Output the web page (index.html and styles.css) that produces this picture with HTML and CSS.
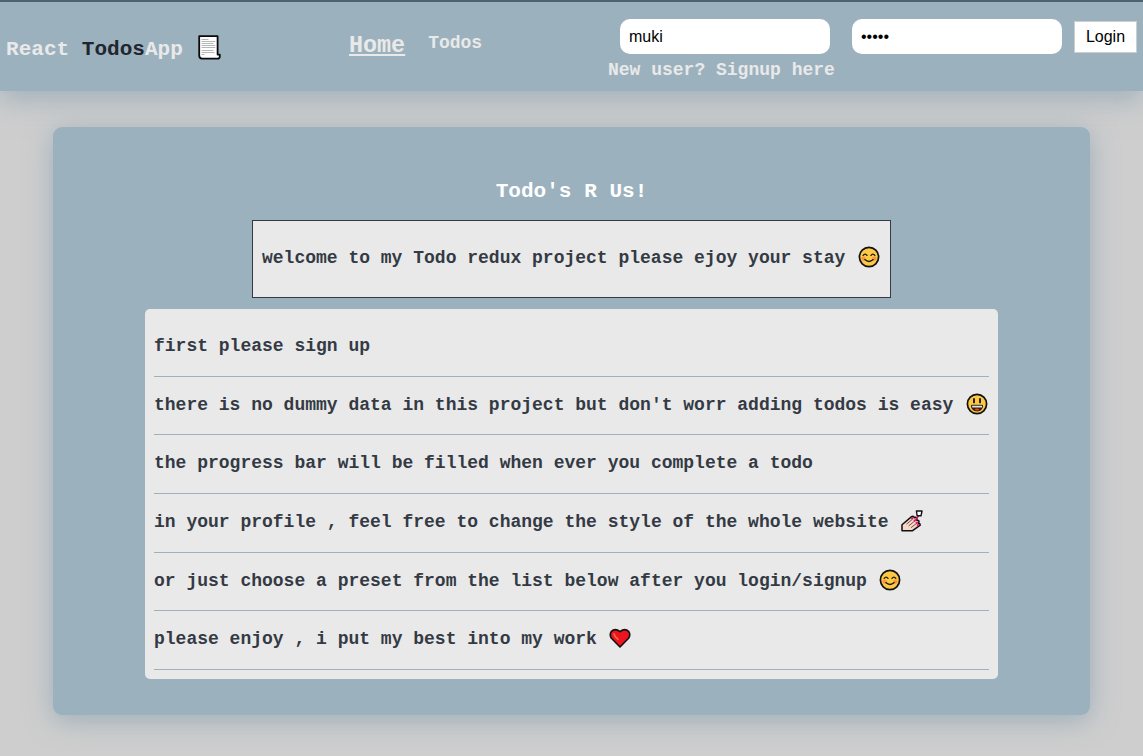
FILE: index.html
```html
<!DOCTYPE html>
<html lang="en">
<head>
<meta charset="utf-8">
<title>React TodosApp</title>
<link rel="stylesheet" href="styles.css">
</head>
<body>
<svg class="defs" width="0" height="0">
  <symbol id="smile" viewBox="0 0 22 22">
    <circle cx="11" cy="11" r="9.6" fill="#fcc944" stroke="#111" stroke-width="1.7"/>
    <circle cx="5.6" cy="12.6" r="2.2" fill="#f5983f"/><circle cx="16.4" cy="12.6" r="2.2" fill="#f5983f"/>
    <path d="M5.2 9.4q1.9-2.6 3.8 0M13 9.4q1.9-2.6 3.8 0M6.8 13.6q4.2 3.8 8.4 0" fill="none" stroke="#20180c" stroke-width="1.3" stroke-linecap="round"/>
  </symbol>
</svg>
<header class="navbar">
  <h3 class="logo">React&nbsp;<span class="logo-dark">Todos</span>App
    <svg class="scroll" viewBox="0 0 23 25">
      <path d="M1.2 1.2H19.6V19.6h2.2v1.8q0 2.2-2.4 2.2H4q-2.8 0-2.8-3z" fill="#fff" stroke="#0b0b0b" stroke-width="1.8" stroke-linejoin="round"/>
      <path d="M3.5 4.5h7M3.5 6.5h13.8M3.5 8.5h12M3.5 10.5h13.8M3.5 12.5h13.8M3.5 15.5h12M3.5 17.5h13M3.5 19.5h3" stroke="#b5b8ba" stroke-width="1"/>
    </svg>
  </h3>
  <nav class="links">
    <a class="home">Home</a>
    <a class="todos">Todos</a>
  </nav>
  <form class="login">
    <div class="fields">
      <input type="text" value="muki">
      <input type="password" value="abcde">
      <button type="button">Login</button>
    </div>
    <a class="signup">New user? Signup here</a>
  </form>
</header>
<main class="card">
  <h3 class="title">Todo's R Us!</h3>
  <div class="welcome">welcome to my Todo redux project please ejoy your stay <svg class="emoji"><use href="#smile"/></svg></div>
  <div class="list">
    <p>first please sign up</p>
    <p>there is no dummy data in this project but don't worr adding todos is easy
      <svg class="emoji" viewBox="0 0 22 22">
        <circle cx="11" cy="11" r="9.6" fill="#fcc944" stroke="#111" stroke-width="1.7"/>
        <path d="M8 6v3.4M14 6v3.4" stroke="#20180c" stroke-width="1.9" stroke-linecap="round"/>
        <path d="M5.5 12.3h11q0 5.6-5.5 5.6t-5.5-5.6z" fill="#351f12" stroke="#20180c" stroke-width="1"/>
        <path d="M6 12.7h10v1.7H6.3z" fill="#d9e4e4"/>
        <ellipse cx="11" cy="16.5" rx="2.2" ry="1" fill="#ed3b25"/>
      </svg></p>
    <p>the progress bar will be filled when ever you complete a todo</p>
    <p>in your profile , feel free to change the style of the whole website
      <svg class="emoji" viewBox="0 0 22 22">
        <path d="M1 14.8 10.6 6.6q1.4-.9 2.2.3l.4.8 1.6-.4 1.2 1.6-.2 1.4 1.8.3.5 1.4-.8 1.5 1.6.3.3 1.3-7.6 5.6H1z" fill="#f8d9c5" stroke="#111" stroke-width="1.5" stroke-linejoin="round"/>
        <path d="M5.5 14.2l6.2-5.2M7.6 16l6.8-5.6M10 17.7l6-4.6" stroke="#4a342d" stroke-width=".8"/>
        <path d="M10.4 9l1.8-1.6M13 11.2l2-1.8M14.9 13.4l1.8-1.5M16 15.8l1.7-1.3" stroke="#e5176c" stroke-width="1.9"/>
        <path d="M15.4 9.2l2.2-3.6" stroke="#e5176c" stroke-width="1.5"/>
        <path d="M15.4 1h5.6l-1 4.8h-3.8z" fill="#fff" stroke="#111" stroke-width="1.4" stroke-linejoin="round"/>
      </svg></p>
    <p>or just choose a preset from the list below after you login/signup <svg class="emoji"><use href="#smile"/></svg></p>
    <p>please enjoy , i put my best into my work
      <svg class="emoji" viewBox="0 0 22 22">
        <path d="M11 20 2.4 11.2Q.2 7.8 2.2 4.6 6 .8 11 4.6q5-3.8 8.8 0 2 3.2-.2 6.6z" fill="#ed1420" stroke="#111" stroke-width="1.6" stroke-linejoin="round"/>
        <path d="M5 6.8q.4 2.8 4 5.4" fill="none" stroke="#f5683f" stroke-width="1.7" stroke-linecap="round"/>
      </svg></p>
  </div>
</main>
</body>
</html>
```
FILE: styles.css
```css
* { box-sizing: border-box; }
body {
  margin: 0;
  height: 756px;
  overflow: hidden;
  background: #cecece;
  font: bold 18px/21px "Courier New", "Liberation Mono", monospace;
  color: #343a44;
}
.defs { display: block; }
.navbar {
  display: flex;
  height: 91px;
  padding-left: 6px;
  background: #9cb1be;
  border-top: 2px solid #4f626e;
  box-shadow: 0 7px 27px rgba(140, 163, 178, .75);
  color: #e9e9e9;
}
.logo {
  display: flex;
  width: 343px;
  margin: 0;
  padding-top: 34px;
  font-size: 21.06px;
  line-height: 27px;
}
.logo-dark { color: #20262e; }
.scroll { width: 23px; height: 25px; margin: -1px 0 0 15px; }
.links { display: flex; gap: 23px; width: 259px; padding-top: 31px; }
.home { font-size: 23.4px; line-height: 27px; text-decoration: underline; }
.todos { line-height: 21px; }
.login { display: flex; flex-direction: column; margin: 0; padding-top: 17px; }
.fields { display: flex; align-items: center; padding-left: 12px; }
.fields input {
  width: 210px;
  height: 35px;
  margin: 0 22px 0 0;
  padding: 0 9px;
  border: 0;
  border-radius: 10px;
  background: #fff;
  color: #000;
  font: 16px "Liberation Sans", sans-serif;
}
.fields input[type="password"] { margin-right: 12px; }
.fields button {
  width: 63px;
  height: 32px;
  margin-top: 1px;
  padding: 0;
  border: 1px solid #cecece;
  background: #fff;
  color: #000;
  font: 16px "Liberation Sans", sans-serif;
}
.signup { margin-top: 6px; }
.card {
  display: flex;
  flex-direction: column;
  align-items: center;
  width: 1037px;
  height: 588px;
  margin: 36px auto 0 53px;
  padding-top: 52px;
  border-radius: 9px;
  background: #9cb1be;
  box-shadow: 0 5px 27px rgba(140, 163, 178, .75);
}
.title { margin: 0; font-size: 21.06px; line-height: 24px; color: #fff; }
.welcome {
  width: 639px;
  height: 78px;
  margin-top: 17px;
  padding: 27px 9px 0;
  border: 1px solid #343a44;
  background: #e9e9e9;
  white-space: nowrap;
}
.list {
  width: 853px;
  height: 370px;
  margin-top: 11px;
  padding: 9px;
  border-radius: 5px;
  background: #e9e9e9;
}
.list p {
  height: 58.65px;
  margin: 0;
  padding-top: 18px;
  border-bottom: 1px solid #9cb1be;
  white-space: nowrap;
}
.emoji { width: 22px; height: 22px; margin: -6px 0 -4px 1.5px; vertical-align: -1px; }
```
